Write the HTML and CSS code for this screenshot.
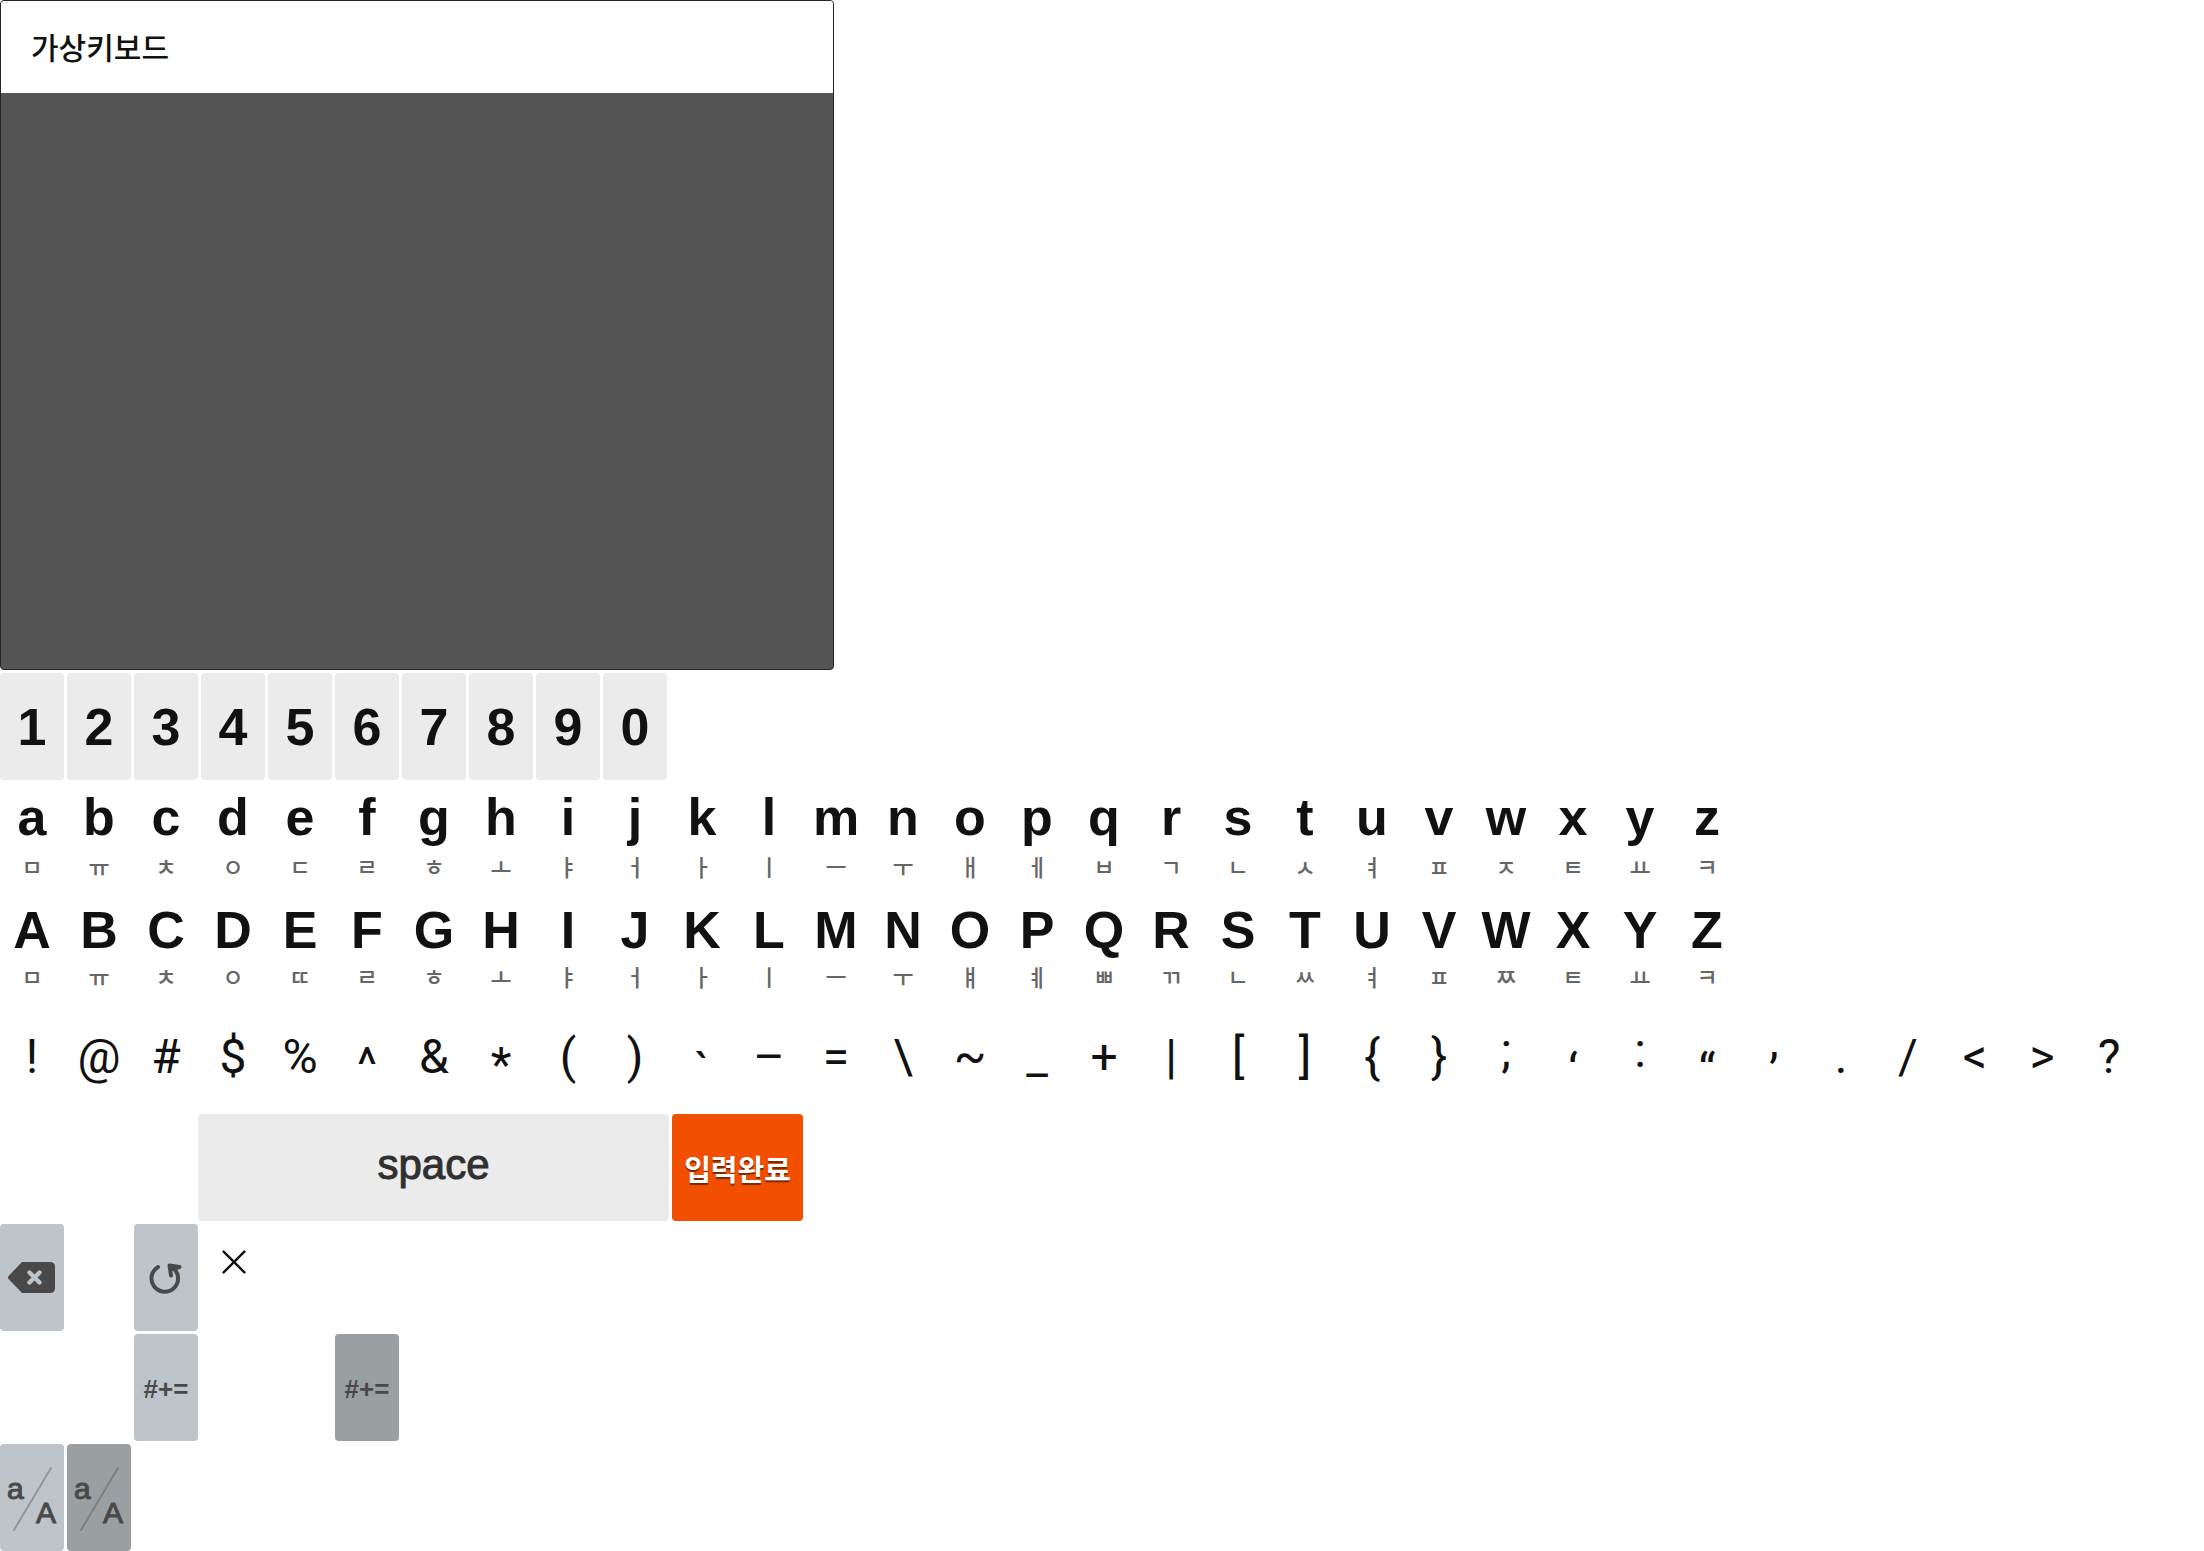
FILE: index.html
```
<!DOCTYPE html>
<html lang="ko">
<head>
<meta charset="utf-8">
<title>가상키보드</title>
<link rel="stylesheet" href="styles.css">
</head>
<body>
<main class="keyboard">
  <section class="panel">
    <h1 class="panel-title">가상키보드</h1>
    <div class="panel-body"></div>
  </section>
  <div class="row" id="digits"></div>
  <div class="row" id="lower"></div>
  <div class="row" id="upper"></div>
  <div class="row" id="symbols"></div>
  <div class="row row-space">
    <button class="key key-space" type="button">space</button>
    <button class="key key-done" type="button">입력완료</button>
  </div>
  <div class="row row-fn">
    <button class="key key-fn" type="button" aria-label="지우기">
      <svg width="64" height="107" viewBox="0 0 64 107">
        <path d="M22 38H50Q55 38 55 43V64Q55 69 50 69H22L9 55.500Q7 53.500 9 51.500Z" fill="#494949"/>
        <path d="M29.500 48.500L39.500 58.500M39.500 48.500L29.500 58.500" stroke="#bdc4ca" stroke-width="4.400" stroke-linecap="round"/>
      </svg>
    </button>
    <button class="key key-fn col-3" type="button" aria-label="새로고침">
      <svg width="64" height="107" viewBox="0 0 64 107" fill="none" stroke="#494949" stroke-width="4" stroke-linecap="round" stroke-linejoin="round">
        <path d="M24 43A13.300 13.300 0 1 0 39 44"/>
        <path d="M37 51.500L35.500 41.500L45.500 43L38 45"/>
      </svg>
    </button>
    <button class="close" type="button" aria-label="닫기">
      <svg width="30" height="30" viewBox="0 0 30 30"><path d="M2 2L28 28M28 2L2 28" stroke="#111" stroke-width="3" stroke-linecap="round"/></svg>
    </button>
  </div>
  <div class="row row-fn">
    <button class="key key-fn key-mode col-3" type="button">#+=</button>
    <button class="key key-fn key-mode key-on col-6" type="button">#+=</button>
  </div>
  <div class="row">
    <button class="key key-fn key-case" type="button">
      <span class="case-small">a</span><span class="case-big">A</span>
      <svg class="slash" width="64" height="107" viewBox="0 0 64 107"><path d="M51 24L14 86" stroke="#92979a" stroke-width="2" stroke-linecap="round"/></svg>
    </button>
    <button class="key key-fn key-on key-case" type="button">
      <span class="case-small">a</span><span class="case-big">A</span>
      <svg class="slash" width="64" height="107" viewBox="0 0 64 107"><path d="M51 24L14 86" stroke="#7c8082" stroke-width="2" stroke-linecap="round"/></svg>
    </button>
  </div>
</main>
<script src="keys.js"></script>
</body>
</html>
```
FILE: styles.css
```
* { box-sizing: border-box; }

body {
  margin: 0;
  background: #fff;
  color: #111;
  font-family: "Liberation Sans", "Noto Sans CJK KR", sans-serif;
}

.keyboard {
  display: flex;
  flex-direction: column;
  gap: 3px;
}

.panel {
  max-width: 834px;
  margin: 0;
  border: 1px solid #262424;
  border-radius: 4px;
  overflow: hidden;
  background: #545454;
}

.panel-title {
  margin: 0;
  padding: 0 30px 2px;
  background: #fff;
  font: 500 30px/90px "Noto Sans CJK KR", sans-serif;
}

.panel-body { height: 576px; }

.row {
  display: flex;
  gap: 3px;
}

.key {
  flex: none;
  display: flex;
  justify-content: center;
  align-items: center;
  width: 64px;
  height: 107px;
  padding: 0;
  border: 0;
  border-radius: 4px;
  background: none;
  color: inherit;
  font: 700 52px/60px "Liberation Sans", "Noto Sans CJK KR", sans-serif;
}

.key-digit { background: #ebebeb; }

.key-letter {
  flex-direction: column;
  justify-content: flex-start;
  padding-top: 4px;
}

.key-upper { padding-top: 7px; }

.jamo {
  margin-top: 3px;
  color: #666;
  font: 500 23px/32px "Noto Sans CJK KR", sans-serif;
}

.key-upper .jamo { margin-top: 0; }

.key-symbol {
  align-items: flex-start;
  padding-top: 24px;
  font: 400 48px/60px Roboto, sans-serif;
}

.mark-low { padding-top: 32px; }
.mark-lower { padding-top: 38px; }
.mark-high { padding-top: 18px; }
.mark-higher { padding-top: 8px; }

.row-space {
  margin-top: 1px;
  padding-left: 198px;
}

.key-space {
  width: 471px;
  padding-bottom: 6px;
  background: #ebebeb;
  color: #303030;
  font-size: 42px;
  font-weight: 400;
  -webkit-text-stroke: 1px #303030;
}

.key-done {
  width: 131px;
  background: #f25000;
  color: #fff;
  font: 700 29px/40px "Noto Sans CJK KR", sans-serif;
  text-shadow: 0 2px 1px rgba(0, 0, 0, 0.5);
}

.row-fn {
  display: grid;
  grid-template-columns: repeat(6, 64px);
}

.key-fn {
  background: #bdc4ca;
  color: #494949;
  font-size: 26px;
}

.key-mode { padding-top: 3px; }

.key-on { background: #9a9fa2; }

.col-3 { grid-column: 3; }
.col-6 { grid-column: 6; }

.close {
  display: flex;
  align-self: start;
  margin: 23px 19px;
  padding: 0;
  border: 0;
  background: none;
}

.close svg { margin-left: 2px; }

.key-case {
  position: relative;
  justify-content: space-between;
  align-items: flex-start;
  padding: 28px 8px 0 7px;
  font-size: 30px;
  font-weight: 400;
  line-height: 34px;
  -webkit-text-stroke: 1px #494949;
}

.case-big { padding-top: 24px; }

.slash {
  position: absolute;
  inset: 0;
}
```
FILE: keys.js
```
const lowerJamo = [..."ㅁㅠㅊㅇㄷㄹㅎㅗㅑㅓㅏㅣㅡㅜㅐㅔㅂㄱㄴㅅㅕㅍㅈㅌㅛㅋ"];
const upperJamo = [..."ㅁㅠㅊㅇㄸㄹㅎㅗㅑㅓㅏㅣㅡㅜㅒㅖㅃㄲㄴㅆㅕㅍㅉㅌㅛㅋ"];
const letters = [..."abcdefghijklmnopqrstuvwxyz"];
const symbols = [..."!@#$%^&*()`–=\\~_+|[]{};‘:“,./<>?"];
const markClass = {
  "^": "mark-low", "*": "mark-low",
  "`": "mark-lower", "‘": "mark-lower", "“": "mark-lower",
  ";": "mark-high", ":": "mark-high", ",": "mark-higher"
};

function addKey(rowId, label, className, jamo) {
  const key = document.createElement("button");
  key.type = "button";
  key.className = "key " + className;
  const main = document.createElement("span");
  main.textContent = label;
  key.append(main);
  if (jamo) {
    const sub = document.createElement("span");
    sub.className = "jamo";
    sub.textContent = jamo;
    key.append(sub);
  }
  document.getElementById(rowId).append(key);
}

[..."1234567890"].forEach(d => addKey("digits", d, "key-digit"));
letters.forEach((l, i) => addKey("lower", l, "key-letter", lowerJamo[i]));
letters.forEach((l, i) => addKey("upper", l.toUpperCase(), "key-letter key-upper", upperJamo[i]));
symbols.forEach(s => addKey("symbols", s, "key-symbol " + (markClass[s] || "")));
```
